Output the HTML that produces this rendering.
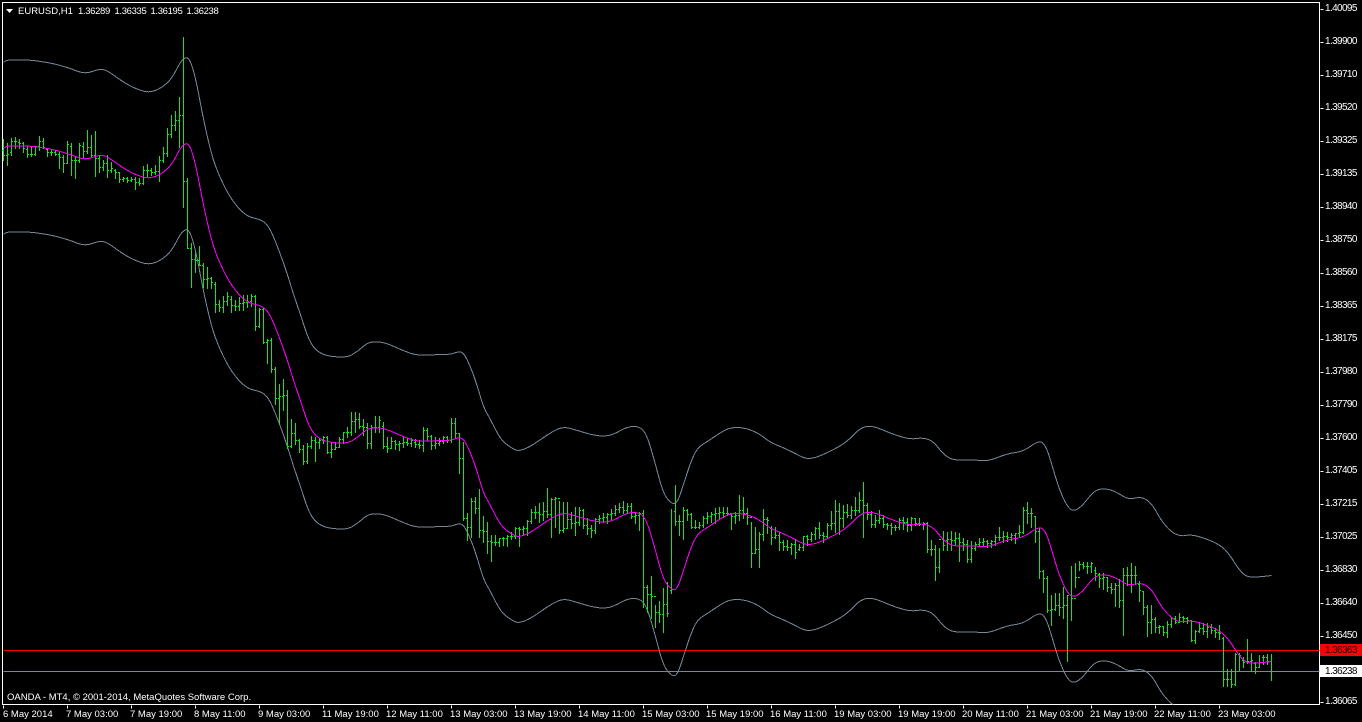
<!DOCTYPE html>
<html>
<head>
<meta charset="utf-8">
<title>EURUSD,H1</title>
<style>
html,body{margin:0;padding:0;background:#000;width:1362px;height:722px;overflow:hidden}
svg{display:block}
text{font-family:"Liberation Sans",sans-serif;font-size:9.5px;fill:#fff}
.p{letter-spacing:-.35px}
.a{font-size:10px;letter-spacing:-.62px}
</style>
</head>
<body>
<svg width="1362" height="722" viewBox="0 0 1362 722" xmlns="http://www.w3.org/2000/svg">
<defs>
<clipPath id="c"><rect x="3" y="3" width="1316" height="701"/></clipPath>
<path id="m" fill="none" d="M3 148Q5 146 7.5 145.75Q10 145.5 20 145.5Q30 145.5 35 146.25Q40 147 45 147.75Q50 148.5 55 149.75Q60 151 65 152.5Q70 154 75 156Q80 158 84 158.25Q88 158.5 92.5 156.75Q97 155 101 155Q105 155 110 158.5Q115 162 120 165.5Q125 169 130 171.5Q135 174 139 175.5Q143 177 147.5 177.25Q152 177.5 157.5 174.75Q163 172 167.5 167.5Q172 163 176 155Q180 147 182.5 145Q185 143 186.5 143.25Q188 143.5 190 147.75Q192 152 194.5 162.5Q197 173 199.5 186.5Q202 200 204.5 211.5Q207 223 209.5 233Q212 243 214.5 250Q217 257 219.5 262.5Q222 268 225 274Q228 280 231.5 285Q235 290 238.5 294Q242 298 246 300.5Q250 303 255 304Q260 305 263.5 307.5Q267 310 270 316Q273 322 276.5 331Q280 340 283.5 350Q287 360 290 370Q293 380 296.5 390Q300 400 303.5 411Q307 422 310 427.5Q313 433 316.5 436Q320 439 325 440.5Q330 442 338.5 442.5Q347 443 352 440Q357 437 362 432.5Q367 428 372 427.5Q377 427 382 428Q387 429 393.5 432Q400 435 406.5 437.5Q413 440 418 440.5Q423 441 430 440.5Q437 440 443.5 440Q450 440 454 438.5Q458 437 460.5 437.5Q463 438 466.5 445Q470 452 473.5 462Q477 472 480 482.5Q483 493 486.5 499Q490 505 495 515Q500 525 505 529Q510 533 514 535Q518 537 524 534.5Q530 532 535 528.5Q540 525 546 521Q552 517 557.5 514.5Q563 512 570 514Q577 516 583.5 518Q590 520 596.5 521Q603 522 608 521Q613 520 620 516Q627 512 633.5 512Q640 512 643.5 517Q647 522 651 536Q655 550 659 565Q663 580 667.5 585Q672 590 674.5 589Q677 588 680 579Q683 570 686.5 559Q690 548 693.5 540.5Q697 533 702 530Q707 527 713.5 522.5Q720 518 725 515.5Q730 513 736.5 513Q743 513 750 515.5Q757 518 763.5 523Q770 528 775 530Q780 532 786.5 535Q793 538 800.5 542Q808 546 819 541.5Q830 537 838.5 532Q847 527 853.5 520Q860 513 866 512Q872 511 882.5 515.5Q893 520 901.5 522.5Q910 525 916.5 524Q923 523 928 525Q933 527 938 533.5Q943 540 948 543Q953 546 962.5 545.5Q972 545 979.5 546Q987 547 997 543Q1007 539 1015 538Q1023 537 1030.5 531.5Q1038 526 1041.5 528Q1045 530 1048.5 541Q1052 552 1055 562.5Q1058 573 1062.5 583Q1067 593 1070.5 595Q1074 597 1078.5 593.5Q1083 590 1087.5 584Q1092 578 1096 576Q1100 574 1105 574.5Q1110 575 1115 577.5Q1120 580 1124 582.5Q1128 585 1135 583.5Q1142 582 1147 586Q1152 590 1156 597.5Q1160 605 1165 611Q1170 617 1175 619.5Q1180 622 1185 621Q1190 620 1196 621.5Q1202 623 1209.5 626Q1217 629 1222 633Q1227 637 1232 645Q1237 653 1241 657.5Q1245 662 1250 662.5Q1255 663 1271 661"/>
</defs>
<rect width="1362" height="722" fill="#000"/>
<g transform="translate(.5 .5)" shape-rendering="crispEdges">
<!-- frame -->
<path d="M2 2H1319V704H2Z" fill="none" stroke="#fff"/>
<!-- horizontal levels -->
<path d="M3 650H1319" stroke="#f00" fill="none"/>
<path d="M3 671H1319" stroke="#778899" fill="none"/>
<!-- price ticks -->
<path d="M1320 9h3M1320 42h3M1320 75h3M1320 108h3M1320 141h3M1320 174h3M1320 207h3M1320 240h3M1320 273h3M1320 306h3M1320 339h3M1320 372h3M1320 405h3M1320 438h3M1320 471h3M1320 504h3M1320 537h3M1320 570h3M1320 603h3M1320 636h3M1320 702h3" stroke="#fff" fill="none"/>
<!-- time ticks -->
<path d="M3 705v3M67 705v3M131 705v3M195 705v3M259 705v3M323 705v3M387 705v3M451 705v3M515 705v3M579 705v3M643 705v3M707 705v3M771 705v3M835 705v3M899 705v3M963 705v3M1027 705v3M1091 705v3M1155 705v3M1219 705v3" stroke="#fff" fill="none"/>
<!-- bands -->
<g clip-path="url(#c)">
<use href="#m" transform="translate(0 -86)" stroke="#778899"/>
<use href="#m" transform="translate(0 86)" stroke="#778899"/>
</g>
<!-- bars -->
<path fill="none" stroke="#14e814" stroke-linecap="square" d="M3 139V160M2 150h1M3 155h1M7 143V165M6 155h1M7 154h1M11 138V155M10 152h1M11 141h1M15 137V148M14 141h1M15 141h1M19 139V148M18 142h1M19 143h1M23 142V152M22 143h1M23 148h1M27 146V157M26 149h1M27 154h1M31 147V156M30 154h1M31 154h1M35 147V155M34 154h1M35 146h1M39 136V150M38 146h1M39 141h1M43 138V148M42 141h1M43 147h1M47 148V156M46 149h1M47 152h1M51 149V155M50 152h1M51 152h1M55 150V155M54 152h1M55 154h1M59 152V168M58 154h1M59 157h1M63 155V172M62 157h1M63 163h1M67 141V163M66 163h1M67 144h1M71 143V175M70 146h1M71 160h1M75 157V178M74 160h1M75 160h1M79 143V162M78 160h1M79 145h1M83 142V158M82 146h1M83 151h1M87 130V153M86 151h1M87 147h1M91 135V157M90 147h1M91 155h1M95 131V176M94 155h1M95 158h1M99 156V172M98 158h1M99 167h1M103 160V170M102 167h1M103 163h1M107 155V177M106 163h1M107 170h1M111 162V172M110 170h1M111 168h1M115 169V178M114 170h1M115 172h1M119 172V182M118 172h1M119 179h1M123 177V181M122 179h1M123 178h1M127 177V182M126 178h1M127 180h1M131 177V181M130 180h1M131 179h1M135 177V189M134 179h1M135 182h1M139 178V185M138 182h1M139 183h1M143 166V184M142 183h1M143 170h1M147 164V176M146 170h1M147 170h1M151 168V175M150 170h1M151 172h1M155 165V174M154 172h1M155 171h1M159 156V181M158 171h1M159 160h1M163 147V162M162 160h1M163 153h1M167 128V156M166 153h1M167 134h1M171 115V137M170 134h1M171 125h1M175 111V130M174 125h1M175 120h1M179 97V147M178 120h1M179 115h1M183 37V207M182 115h1M183 181h1M187 178V248M186 181h1M187 248h1M191 243V287M190 248h1M191 259h1M195 253V272M194 259h1M195 260h1M199 246V265M198 260h1M199 265h1M203 263V287M202 265h1M203 279h1M207 267V288M206 279h1M207 278h1M211 277V288M210 278h1M211 282h1M215 282V312M214 284h1M215 304h1M219 300V311M218 304h1M219 307h1M223 296V312M222 307h1M223 301h1M227 292V305M226 301h1M227 296h1M231 296V312M230 299h1M231 305h1M235 300V310M234 305h1M235 306h1M239 297V310M238 306h1M239 303h1M243 295V310M242 303h1M243 302h1M247 295V307M246 302h1M247 301h1M251 294V306M250 301h1M251 296h1M255 295V330M254 296h1M255 326h1M259 308V327M258 326h1M259 309h1M263 308V343M262 309h1M263 342h1M267 339V363M266 342h1M267 340h1M271 338V372M270 340h1M271 369h1M275 367V404M274 369h1M275 398h1M279 384V423M278 398h1M279 396h1M283 379V410M282 396h1M283 395h1M287 390V448M286 395h1M287 446h1M291 419V447M290 446h1M291 433h1M295 423V444M294 433h1M295 440h1M299 439V452M298 440h1M299 449h1M303 445V464M302 449h1M303 461h1M307 443V463M306 461h1M307 446h1M311 436V448M310 446h1M311 440h1M315 437V461M314 440h1M315 442h1M319 438V448M318 442h1M319 440h1M323 436V443M322 440h1M323 437h1M327 436V453M326 437h1M327 452h1M331 442V457M330 452h1M331 449h1M335 443V449M334 449h1M335 447h1M339 437V446M338 447h1M339 439h1M343 432V443M342 439h1M343 432h1M347 427V437M346 432h1M347 432h1M351 412V435M350 432h1M351 421h1M355 412V432M354 421h1M355 419h1M359 413V428M358 419h1M359 426h1M363 419V435M362 426h1M363 427h1M367 423V448M366 427h1M367 443h1M371 425V448M370 443h1M371 427h1M375 416V432M374 427h1M375 427h1M379 416V432M378 427h1M379 420h1M383 422V448M382 426h1M383 446h1M387 437V452M386 446h1M387 448h1M391 437V448M390 448h1M391 441h1M395 440V449M394 441h1M395 444h1M399 441V450M398 444h1M399 443h1M403 437V447M402 443h1M403 442h1M407 438V445M406 442h1M407 443h1M411 438V446M410 443h1M411 440h1M415 439V447M414 442h1M415 444h1M419 440V448M418 444h1M419 445h1M423 427V451M422 445h1M423 430h1M427 428V440M426 430h1M427 436h1M431 435V449M430 436h1M431 445h1M435 437V448M434 445h1M435 443h1M439 438V445M438 443h1M439 441h1M443 436V443M442 441h1M443 437h1M447 436V442M446 437h1M447 440h1M451 418V442M450 440h1M451 423h1M455 418V437M454 423h1M455 433h1M459 433V473M458 433h1M459 458h1M463 442V520M462 458h1M463 518h1M467 513V540M466 518h1M467 527h1M471 498V537M470 527h1M471 501h1M475 497V513M474 501h1M475 508h1M479 489V537M478 508h1M479 530h1M483 516V542M482 530h1M483 531h1M487 522V553M486 531h1M487 541h1M491 535V561M490 541h1M491 542h1M495 535V545M494 542h1M495 542h1M499 538V546M498 542h1M499 538h1M503 537V545M502 538h1M503 538h1M507 535V546M506 538h1M507 536h1M511 532V539M510 536h1M511 536h1M515 527V538M514 536h1M515 528h1M519 527V546M518 528h1M519 529h1M523 526V534M522 529h1M523 528h1M527 520V535M526 528h1M527 521h1M531 509V523M530 521h1M531 512h1M535 506V518M534 512h1M535 512h1M539 503V522M538 512h1M539 514h1M543 502V520M542 514h1M543 511h1M547 488V517M546 511h1M547 514h1M551 498V537M550 514h1M551 499h1M555 497V527M554 499h1M555 498h1M559 501V533M558 498h1M559 530h1M563 502V532M562 530h1M563 528h1M567 502V527M566 528h1M567 519h1M571 512V528M570 519h1M571 523h1M575 507V535M574 523h1M575 522h1M579 507V525M578 522h1M579 510h1M583 509V528M582 510h1M583 525h1M587 518V534M586 525h1M587 528h1M591 525V537M590 528h1M591 530h1M595 518V533M594 530h1M595 519h1M599 515V523M598 519h1M599 518h1M603 513V522M602 518h1M603 517h1M607 513V523M606 517h1M607 514h1M611 509V520M610 514h1M611 513h1M615 505V515M614 513h1M615 509h1M619 503V512M618 509h1M619 507h1M623 501V513M622 507h1M623 510h1M627 503V512M626 510h1M627 506h1M631 503V518M630 506h1M631 516h1M635 512V523M634 516h1M635 515h1M639 512V530M638 515h1M639 513h1M643 510V607M642 513h1M643 587h1M647 585V612M646 587h1M647 594h1M651 576V618M650 594h1M651 596h1M655 605V627M654 596h1M655 612h1M659 601V622M658 612h1M659 614h1M663 588V632M662 614h1M663 604h1M667 582V616M666 604h1M667 613h1M671 509V593M670 590h1M671 589h1M675 485V525M674 511h1M675 521h1M679 515V535M678 521h1M679 521h1M683 507V539M682 521h1M683 510h1M687 509V520M686 510h1M687 514h1M691 513V528M690 514h1M691 527h1M695 520V528M694 527h1M695 527h1M699 522V528M698 527h1M699 525h1M703 516V527M702 525h1M703 518h1M707 512V523M706 518h1M707 516h1M711 512V522M710 516h1M711 514h1M715 508V523M714 514h1M715 513h1M719 507V518M718 513h1M719 512h1M723 507V517M722 512h1M723 513h1M727 507V515M726 513h1M727 513h1M731 513V529M730 513h1M731 516h1M735 512V523M734 516h1M735 515h1M739 495V520M738 515h1M739 510h1M743 497V518M742 510h1M743 513h1M747 508V524M746 513h1M747 517h1M751 522V567M750 517h1M751 553h1M755 527V552M754 553h1M755 549h1M759 532V567M758 549h1M759 534h1M763 509V540M762 534h1M763 519h1M767 517V533M766 519h1M767 520h1M771 526V544M770 528h1M771 537h1M775 527V538M774 537h1M775 535h1M779 532V550M778 535h1M779 542h1M783 540V550M782 542h1M783 546h1M787 540V550M786 546h1M787 547h1M791 543V554M790 547h1M791 544h1M795 539V558M794 544h1M795 552h1M799 544V550M798 549h1M799 547h1M803 536V550M802 547h1M803 536h1M807 535V545M806 536h1M807 539h1M811 532V541M810 539h1M811 534h1M815 527V539M814 534h1M815 528h1M819 522V538M818 528h1M819 535h1M823 532V542M822 535h1M823 536h1M827 523V538M826 536h1M827 525h1M831 511V529M830 525h1M831 523h1M835 500V532M834 523h1M835 511h1M839 503V534M838 511h1M839 518h1M843 505V527M842 518h1M843 512h1M847 504V517M846 512h1M847 515h1M851 506V518M850 515h1M851 510h1M855 497V515M854 510h1M855 510h1M859 492V512M858 510h1M859 500h1M863 482V537M862 500h1M863 505h1M867 503V519M866 505h1M867 514h1M871 511V527M870 514h1M871 524h1M875 515V527M874 524h1M875 520h1M879 510V523M878 520h1M879 518h1M883 515V527M882 518h1M883 524h1M887 523V529M886 524h1M887 525h1M891 523V534M890 525h1M891 527h1M895 525V530M894 527h1M895 527h1M899 518V529M898 527h1M899 520h1M903 517V529M902 520h1M903 522h1M907 518V531M906 522h1M907 525h1M911 517V530M910 525h1M911 518h1M915 518V525M914 518h1M915 523h1M919 518V525M918 523h1M919 524h1M923 522V529M922 524h1M923 523h1M927 522V552M926 523h1M927 549h1M931 540V555M930 549h1M931 549h1M935 545V580M934 549h1M935 567h1M939 548V572M938 567h1M939 539h1M943 531V550M942 539h1M943 545h1M947 532V550M946 540h1M947 539h1M951 531V550M950 539h1M951 540h1M955 532V545M954 540h1M955 538h1M959 533V561M958 538h1M959 542h1M963 538V550M962 542h1M963 544h1M967 540V562M966 544h1M967 559h1M971 541V562M970 559h1M971 548h1M975 542V550M974 548h1M975 544h1M979 538V546M978 544h1M979 542h1M983 538V546M982 542h1M983 541h1M987 540V547M986 541h1M987 543h1M991 540V547M990 543h1M991 541h1M995 535V545M994 541h1M995 537h1M999 527V540M998 537h1M999 537h1M1003 531V542M1002 537h1M1003 536h1M1007 532V541M1006 536h1M1007 537h1M1011 533V540M1010 537h1M1011 535h1M1015 533V543M1014 535h1M1015 533h1M1019 525V537M1018 533h1M1019 532h1M1023 507V533M1022 532h1M1023 510h1M1027 502V523M1026 510h1M1027 513h1M1031 508V527M1030 513h1M1031 513h1M1035 516V542M1034 516h1M1035 531h1M1039 528V578M1038 531h1M1039 571h1M1043 570V592M1042 571h1M1043 578h1M1047 576V612M1046 578h1M1047 610h1M1051 595V625M1050 610h1M1051 609h1M1055 593V610M1054 609h1M1055 605h1M1059 593V615M1058 605h1M1059 607h1M1063 587V618M1062 607h1M1063 605h1M1067 595V661M1066 605h1M1067 595h1M1071 566V620M1070 595h1M1071 598h1M1075 563V587M1074 598h1M1075 577h1M1079 561V570M1078 577h1M1079 564h1M1083 562V568M1082 564h1M1083 566h1M1087 562V573M1086 566h1M1087 566h1M1091 562V572M1090 566h1M1091 563h1M1095 567V580M1094 570h1M1095 573h1M1099 573V587M1098 574h1M1099 578h1M1103 573V589M1102 578h1M1103 577h1M1107 578V591M1106 577h1M1107 587h1M1111 583V593M1110 587h1M1111 589h1M1115 583V606M1114 589h1M1115 585h1M1119 579V607M1118 585h1M1119 600h1M1123 568V635M1122 600h1M1123 575h1M1127 567V585M1126 575h1M1127 575h1M1131 563V592M1130 575h1M1131 575h1M1135 566V584M1134 575h1M1135 575h1M1139 581V601M1138 584h1M1139 590h1M1143 591V614M1142 591h1M1143 607h1M1147 605V636M1146 607h1M1147 622h1M1151 605V633M1150 622h1M1151 619h1M1155 617V632M1154 619h1M1155 627h1M1159 625V633M1158 627h1M1159 626h1M1163 626V635M1162 626h1M1163 632h1M1167 621V637M1166 632h1M1167 624h1M1171 617V627M1170 624h1M1171 618h1M1175 616V623M1174 618h1M1175 622h1M1179 613V622M1178 622h1M1179 617h1M1183 616V622M1182 617h1M1183 618h1M1187 617V623M1186 618h1M1187 620h1M1191 620V641M1190 620h1M1191 640h1M1195 630V643M1194 640h1M1195 631h1M1199 622V632M1198 631h1M1199 628h1M1203 623V634M1202 628h1M1203 631h1M1207 623V637M1206 631h1M1207 627h1M1211 624V633M1210 627h1M1211 630h1M1215 628V637M1214 630h1M1215 632h1M1219 625V639M1218 632h1M1219 633h1M1223 637V686M1222 638h1M1223 679h1M1227 669V686M1226 679h1M1227 679h1M1231 669V687M1230 679h1M1231 684h1M1235 653V685M1234 684h1M1235 654h1M1239 653V670M1238 654h1M1239 655h1M1243 657V667M1242 660h1M1243 662h1M1247 639V663M1246 661h1M1247 661h1M1251 653V671M1250 661h1M1251 660h1M1255 662V673M1254 663h1M1255 667h1M1259 655V667M1258 667h1M1259 662h1M1263 655V664M1262 657h1M1263 657h1M1267 654V664M1266 657h1M1267 661h1M1271 654V680M1270 661h1"/>
<!-- moving average -->
<use href="#m" stroke="#ff00ff" clip-path="url(#c)"/>
<!-- price tags -->
<rect x="1320" y="644" width="41" height="11" fill="#f00" stroke="#f00"/>
<rect x="1320" y="665" width="41" height="11" fill="#fff" stroke="#fff"/>
</g>
<!-- header -->
<polygon points="6,9 13,9 9.5,13" fill="#fff"/>
<text x="18" y="14">EURUSD,H1</text>
<text class="p" x="78" y="14">1.36289</text>
<text class="p" x="114.5" y="14">1.36335</text>
<text class="p" x="150.5" y="14">1.36195</text>
<text class="p" x="186.5" y="14">1.36238</text>
<text x="7" y="700">OANDA - MT4, © 2001-2014, MetaQuotes Software Corp.</text>
<!-- price axis -->
<g>
<text class="a" x="1325" y="11">1.40095</text>
<text class="a" x="1325" y="44">1.39900</text>
<text class="a" x="1325" y="77">1.39710</text>
<text class="a" x="1325" y="110">1.39520</text>
<text class="a" x="1325" y="143">1.39325</text>
<text class="a" x="1325" y="176">1.39135</text>
<text class="a" x="1325" y="209">1.38940</text>
<text class="a" x="1325" y="242">1.38750</text>
<text class="a" x="1325" y="275">1.38560</text>
<text class="a" x="1325" y="308">1.38365</text>
<text class="a" x="1325" y="341">1.38175</text>
<text class="a" x="1325" y="374">1.37980</text>
<text class="a" x="1325" y="407">1.37790</text>
<text class="a" x="1325" y="440">1.37600</text>
<text class="a" x="1325" y="473">1.37405</text>
<text class="a" x="1325" y="506">1.37215</text>
<text class="a" x="1325" y="539">1.37025</text>
<text class="a" x="1325" y="572">1.36830</text>
<text class="a" x="1325" y="605">1.36640</text>
<text class="a" x="1325" y="638">1.36450</text>
<text class="a" x="1325" y="704">1.36065</text>
<text class="a" x="1325" y="653" style="fill:#1a0000">1.36363</text>
<text class="a" x="1325" y="674" style="fill:#000">1.36238</text>
</g>
<!-- time axis -->
<text x="3" y="717">6 May 2014</text>
<text x="66" y="717">7 May 03:00</text>
<text x="130" y="717">7 May 19:00</text>
<text x="194" y="717">8 May 11:00</text>
<text x="258" y="717">9 May 03:00</text>
<text x="322" y="717">11 May 19:00</text>
<text x="386" y="717">12 May 11:00</text>
<text x="450" y="717">13 May 03:00</text>
<text x="514" y="717">13 May 19:00</text>
<text x="578" y="717">14 May 11:00</text>
<text x="642" y="717">15 May 03:00</text>
<text x="706" y="717">15 May 19:00</text>
<text x="770" y="717">16 May 11:00</text>
<text x="834" y="717">19 May 03:00</text>
<text x="898" y="717">19 May 19:00</text>
<text x="962" y="717">20 May 11:00</text>
<text x="1026" y="717">21 May 03:00</text>
<text x="1090" y="717">21 May 19:00</text>
<text x="1154" y="717">22 May 11:00</text>
<text x="1218" y="717">23 May 03:00</text>
</svg>
</body>
</html>
